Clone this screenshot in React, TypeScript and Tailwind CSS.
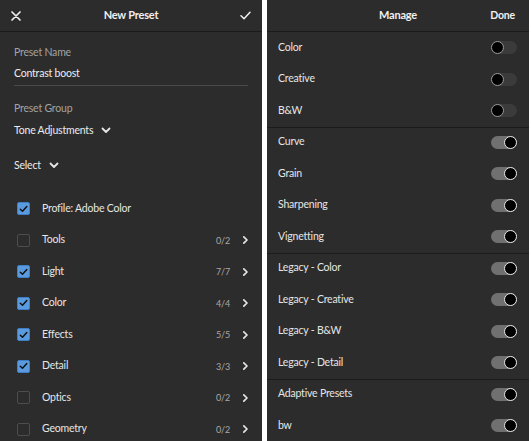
import type { ReactNode } from 'react';

const font = { fontFamily: 'Lato, "Open Sans", "Liberation Sans", sans-serif' };

function Chevron({ dir }: { dir: 'down' | 'right' }) {
  if (dir === 'down') {
    return (
      <svg width="10" height="7" viewBox="0 0 10 7" className="ml-[8px]">
        <path d="M1.5 1.5 L5 5 L8.5 1.5" fill="none" stroke="#e6e6e6" strokeWidth="1.8" strokeLinecap="round" strokeLinejoin="round" />
      </svg>
    );
  }
  return (
    <svg width="7" height="10" viewBox="0 0 7 10">
      <path d="M1.8 1.8 L5 5 L1.8 8.2" fill="none" stroke="#e6e6e6" strokeWidth="1.7" strokeLinecap="round" strokeLinejoin="round" />
    </svg>
  );
}

function Checkbox({ on }: { on: boolean }) {
  if (!on) {
    return <div className="w-[13px] h-[13px] rounded-[2px] border border-[#4d4d4d]" />;
  }
  return (
    <div className="w-[13px] h-[13px] rounded-[2px] bg-[#5a9be0] border border-[#3f7fc6] flex items-center justify-center">
      <svg width="9" height="8" viewBox="0 0 9 8">
        <path d="M1.3 4.2 L3.5 6.2 L7.8 1.6" fill="none" stroke="#111" strokeWidth="1.5" strokeLinecap="round" strokeLinejoin="round" />
      </svg>
    </div>
  );
}

function Toggle({ on }: { on: boolean }) {
  return (
    <div className={`w-[26px] h-[13px] rounded-full flex items-center ${on ? 'bg-[#707070] justify-end' : 'bg-[#3b3b3b] justify-start'}`}>
      <div className={`w-[13px] h-[13px] rounded-full bg-black border-[1.5px] ${on ? 'border-[#e8e8e8]' : 'border-[#9a9a9a]'}`} />
    </div>
  );
}

function Header({ children }: { children: ReactNode }) {
  return (
    <div className="relative h-[32px] shrink-0 flex items-center border-b border-[#1b1b1b] text-[11px] font-bold tracking-[-0.2px] text-[#f0f0f0]">
      {children}
    </div>
  );
}

const presetRows: [string, boolean, string?][] = [
  ['Profile: Adobe Color', true],
  ['Tools', false, '0/2'],
  ['Light', true, '7/7'],
  ['Color', true, '4/4'],
  ['Effects', true, '5/5'],
  ['Detail', true, '3/3'],
  ['Optics', false, '0/2'],
  ['Geometry', false, '0/2'],
];

const groups: [string, boolean][][] = [
  [['Color', false], ['Creative', false], ['B&W', false]],
  [['Curve', true], ['Grain', true], ['Sharpening', true], ['Vignetting', true]],
  [['Legacy - Color', true], ['Legacy - Creative', true], ['Legacy - B&W', true], ['Legacy - Detail', true]],
  [['Adaptive Presets', true], ['bw', true]],
];

export default function App() {
  return (
    <div className="w-[531px] h-[441px] overflow-hidden bg-white flex" style={font}>
      {/* New Preset */}
      <div className="w-[262px] h-full bg-[#2c2c2c] flex flex-col">
        <Header>
          <svg width="10" height="10" viewBox="0 0 10 10" className="absolute left-[11px]">
            <path d="M1 1 L9 9 M9 1 L1 9" stroke="#f0f0f0" strokeWidth="1.7" strokeLinecap="round" />
          </svg>
          <div className="w-full text-center">New Preset</div>
          <svg width="11" height="9" viewBox="0 0 11 9" className="absolute left-[240px]">
            <path d="M1 4.8 L4 7.7 L10 1.2" fill="none" stroke="#f0f0f0" strokeWidth="1.5" strokeLinecap="round" strokeLinejoin="round" />
          </svg>
        </Header>
        <div className="px-[14px] text-[10.5px] tracking-[-0.2px] leading-[16px]">
          <div className="mt-[12px] text-[#a3a3a3]">Preset Name</div>
          <div className="mt-[5px] pb-[4px] border-b border-[#4a4a4a] w-[234px] text-[#ececec]">Contrast boost</div>
          <div className="mt-[14px] text-[#a3a3a3]">Preset Group</div>
          <div className="mt-[6px] flex items-center text-[#ececec]">
            Tone Adjustments
            <Chevron dir="down" />
          </div>
          <div className="mt-[19px] flex items-center text-[#ececec]">
            Select
            <Chevron dir="down" />
          </div>
        </div>
        <div className="mt-[20px]">
          {presetRows.map(([label, on, count]) => (
            <div key={label} className="h-[31.5px] flex items-center pl-[17px] pr-[13px] text-[10.5px] tracking-[-0.2px]">
              <Checkbox on={on} />
              <span className="ml-[12px] flex-1 text-[#e6e6e6]">{label}</span>
              {count && (
                <>
                  <span className="text-[9px] text-[#a8a8a8] mr-[12px]">{count}</span>
                  <Chevron dir="right" />
                </>
              )}
            </div>
          ))}
        </div>
      </div>

      {/* Manage */}
      <div className="ml-[5px] w-[262px] h-full bg-[#2c2c2c] flex flex-col">
        <Header>
          <div className="w-full text-center">Manage</div>
          <div className="absolute right-[14px] text-[10.5px]">Done</div>
        </Header>
        {groups.map((g, i) => (
          <div key={i} className={i > 0 ? 'shadow-[inset_0_1px_0_#1b1b1b]' : ''}>
            {g.map(([label, on]) => (
              <div key={label} className="h-[31.5px] flex items-center pl-[11px] pr-[12px] text-[10.5px] tracking-[-0.2px] text-[#e6e6e6]">
                <span className="flex-1">{label}</span>
                <Toggle on={on} />
              </div>
            ))}
          </div>
        ))}
      </div>
    </div>
  );
}
